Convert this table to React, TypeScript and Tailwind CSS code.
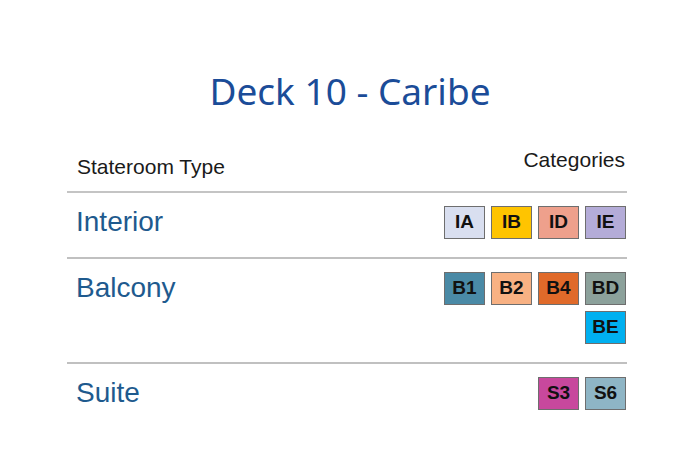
const rows: { name: string; cats: { code: string; bg: string }[] }[] = [
  {
    name: "Interior",
    cats: [
      { code: "IA", bg: "bg-[#d9dff0]" },
      { code: "IB", bg: "bg-[#ffc400]" },
      { code: "ID", bg: "bg-[#eea08c]" },
      { code: "IE", bg: "bg-[#b4acd8]" },
    ],
  },
  {
    name: "Balcony",
    cats: [
      { code: "B1", bg: "bg-[#4a8aa6]" },
      { code: "B2", bg: "bg-[#f8b183]" },
      { code: "B4", bg: "bg-[#e06a2a]" },
      { code: "BD", bg: "bg-[#8ca19b]" },
      { code: "BE", bg: "bg-[#00b0f0]" },
    ],
  },
  {
    name: "Suite",
    cats: [
      { code: "S3", bg: "bg-[#c8489d]" },
      { code: "S6", bg: "bg-[#8eb5c5]" },
    ],
  },
];

export default function App() {
  return (
    <div className="w-[700px] h-[468px] bg-white overflow-hidden font-['Liberation_Sans',Arial,sans-serif]">
      <h1 className="mt-[72px] text-center text-[37px] leading-none text-[#1b4c98] font-['Comic_Sans_MS','Noto_Sans',sans-serif]">
        Deck 10 - Caribe
      </h1>

      <div className="ml-[67px] w-[560px] mt-[39px]">
        <div className="flex justify-between border-b-2 border-[#c4c4c4] pb-[12px]">
          <span className="pl-[10px] mt-[7px] text-[21px] leading-[24px] text-[#1a1a1a]">
            Stateroom Type
          </span>
          <span className="text-[21px] leading-[24px] text-[#1a1a1a] pr-[2px]">
            Categories
          </span>
        </div>

        {rows.map((row, i) => (
          <div
            key={row.name}
            className={`flex justify-between items-start pt-[13px] ${
              i < rows.length - 1 ? "border-b-2 border-[#c0c0c0] pb-[18px]" : ""
            }`}
          >
            <span className="pl-[9px] text-[28px] leading-[32px] text-[#1e5a8e]">
              {row.name}
            </span>
            <div className="w-[184px] flex flex-wrap justify-end gap-[6px] pr-[1px]">
              {row.cats.map((c) => (
                <div
                  key={c.code}
                  className={`${c.bg} w-[41px] h-[33px] border border-[#6e6e6e] flex items-center justify-center text-[19px] font-bold text-[#111]`}
                >
                  {c.code}
                </div>
              ))}
            </div>
          </div>
        ))}
      </div>
    </div>
  );
}
